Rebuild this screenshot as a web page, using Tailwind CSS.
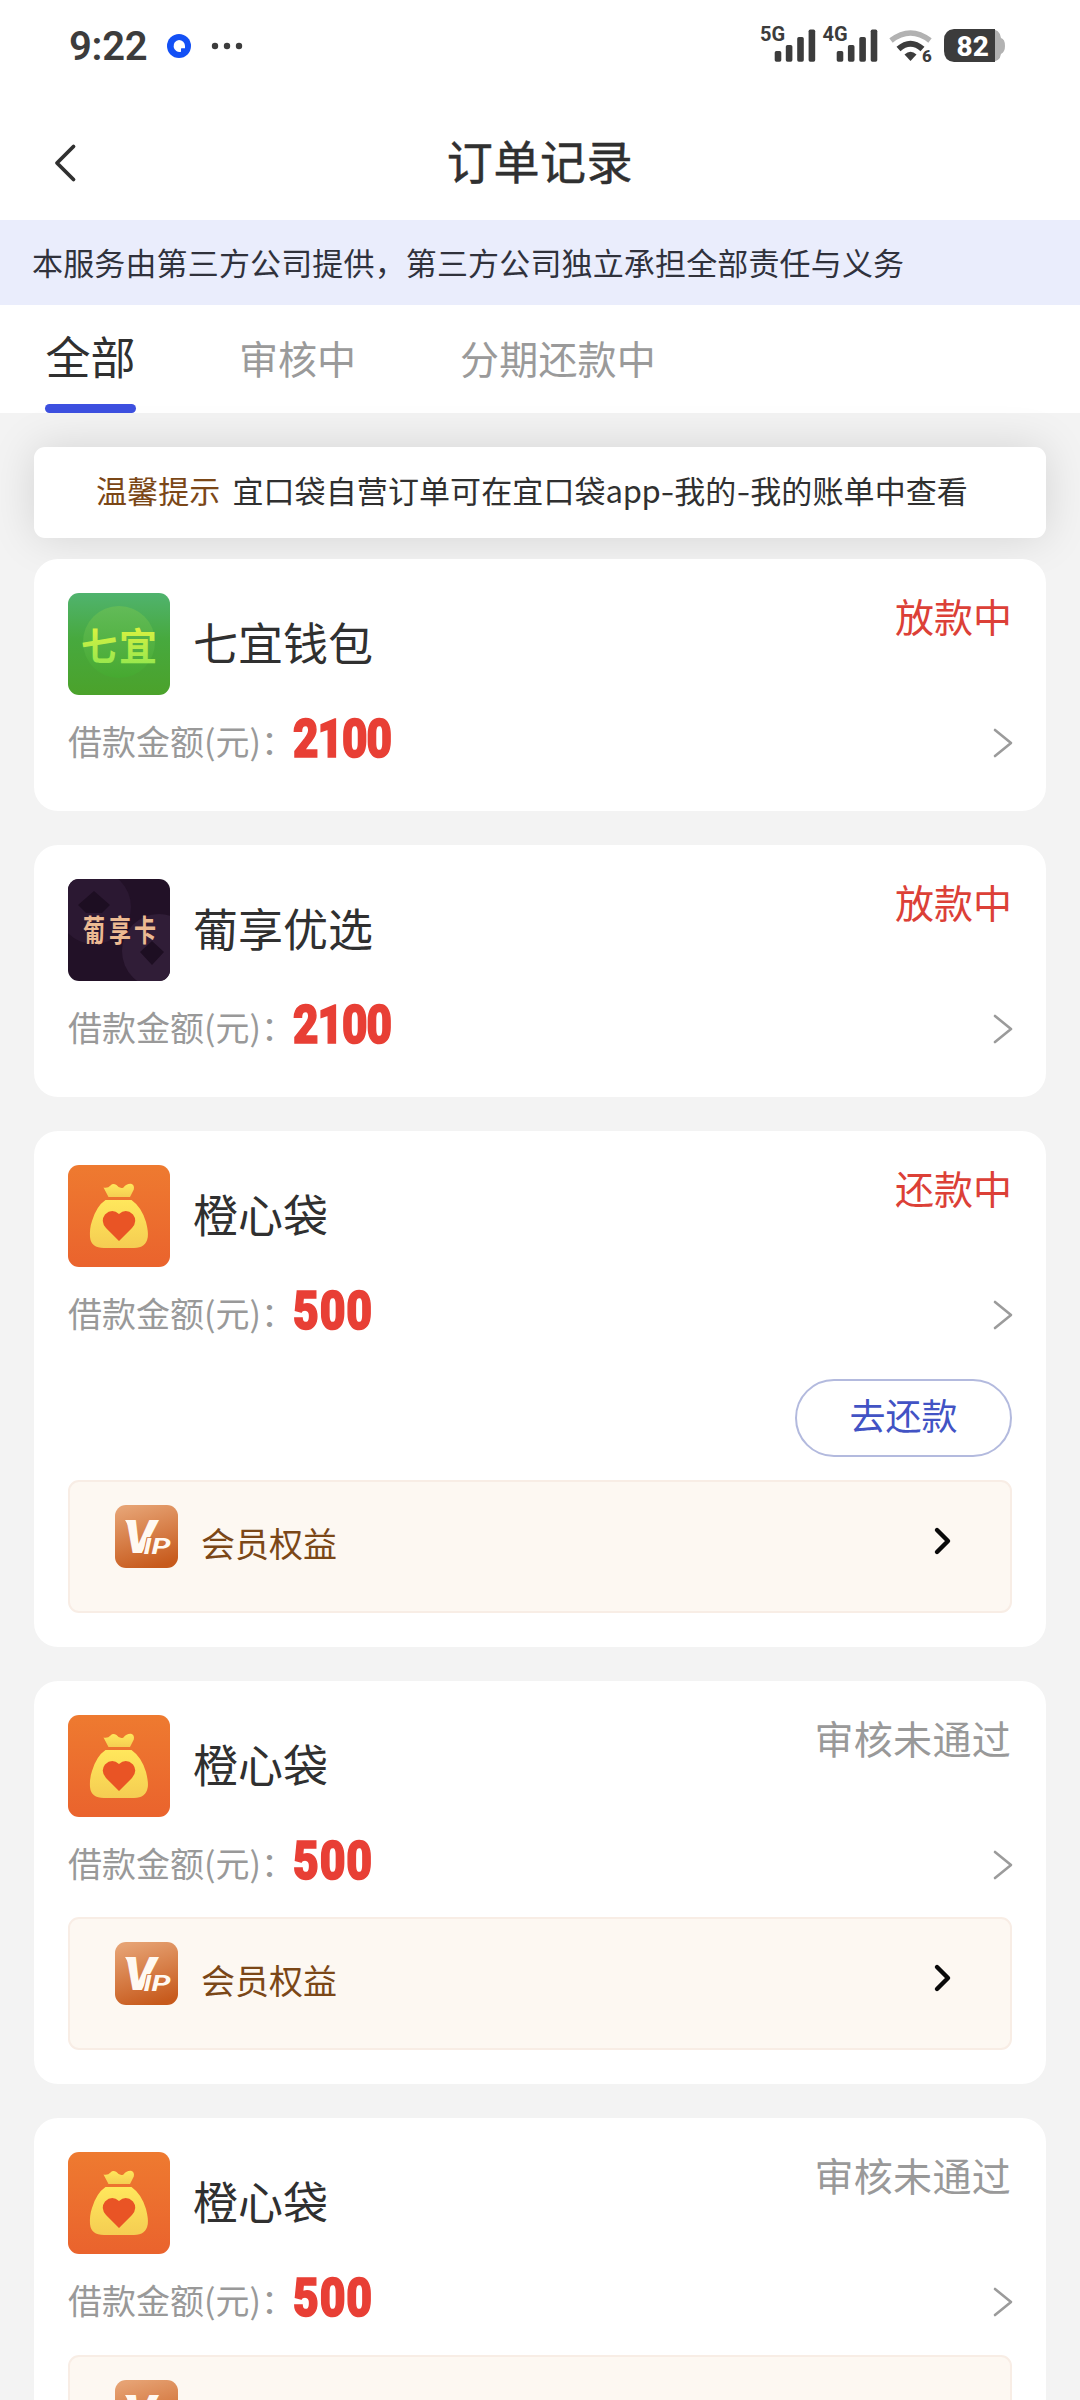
<!DOCTYPE html>
<html lang="zh-CN">
<head>
<meta charset="utf-8">
<title>订单记录</title>
<script src="https://cdn.jsdelivr.net/npm/@tailwindcss/browser@4"></script>
</head>
<body class="w-[1080px] h-[2400px] overflow-hidden bg-[#f3f3f3] text-[#303030] font-['Noto_Sans_CJK_SC',sans-serif] leading-none">

<svg width="0" height="0" class="absolute">
  <defs>
    <linearGradient id="orange" x1="0" y1="0" x2="0" y2="1"><stop offset="0" stop-color="#ee7a30"/><stop offset="1" stop-color="#ea632d"/></linearGradient>
    <linearGradient id="gold" x1="0" y1="0" x2="0" y2="1"><stop offset="0" stop-color="#ffe75c"/><stop offset="1" stop-color="#f5cd52"/></linearGradient>
    <linearGradient id="bronze" x1="0.3" y1="0" x2="0.6" y2="1"><stop offset="0" stop-color="#e6a273"/><stop offset="1" stop-color="#c75a1c"/></linearGradient>
    <linearGradient id="green" x1="0" y1="0" x2="0" y2="1"><stop offset="0" stop-color="#50b36e"/><stop offset="0.45" stop-color="#47a93e"/><stop offset="1" stop-color="#4ba22b"/></linearGradient>
    <linearGradient id="lime" x1="0" y1="0" x2="0" y2="1"><stop offset="0" stop-color="#f0f53c"/><stop offset="1" stop-color="#8be650"/></linearGradient>
    <linearGradient id="disc" x1="0" y1="0" x2="0" y2="1"><stop offset="0" stop-color="#62bb58"/><stop offset="1" stop-color="#46a930"/></linearGradient>
    <symbol id="bag" viewBox="0 0 102 102">
      <rect width="102" height="102" rx="11" fill="url(#orange)"/>
      <path d="M35.500 22.500 Q40 23.500 42.500 20.500 Q45 17.800 48.500 20 Q52 24.500 55.500 22.500 Q58.500 18.500 63 18.800 Q66.800 20 65.800 24.500 L62 32 H40.500 Z" fill="url(#gold)"/>
      <path d="M37.500 35 H63.500 Q73.500 42 78 57 Q80.500 67 79.800 72 Q78 83 66 83 H36 Q23 83 22 72 Q21.500 63 24 56 Q28.500 41 37.500 35 Z" fill="url(#gold)"/>
      <path d="M51 76 L38 63 Q32 56 37 49.500 Q44 43 51 49 Q58 43 65 49.500 Q70 56 64 63 Z" fill="#e95425"/>
    </symbol>
    <symbol id="vip" viewBox="0 0 63 63">
      <rect width="63" height="63" rx="11" fill="url(#bronze)"/>
      <path d="M10 15 H19 V20 H13 Z" fill="#fff9f2"/>
      <text x="8.500" y="48" font-family="Roboto" font-weight="900" font-style="italic" font-size="46" textLength="32" lengthAdjust="spacingAndGlyphs" fill="#fff9f2">V</text>
      <text x="28.500" y="48.500" font-family="Roboto" font-weight="700" font-style="italic" font-size="21.500" textLength="8" lengthAdjust="spacingAndGlyphs" fill="#fff9f2" stroke="#cf6f38" stroke-width="1.600" paint-order="stroke">I</text>
      <text x="36.500" y="48.500" font-family="Roboto" font-weight="700" font-style="italic" font-size="21.500" textLength="19" lengthAdjust="spacingAndGlyphs" fill="#fff9f2">P</text>
    </symbol>
    <symbol id="more" viewBox="0 0 20 30"><path d="M2 2 L18 15 L2 28" fill="none" stroke="#9b9b9b" stroke-width="2.600" stroke-linecap="round" stroke-linejoin="round"/></symbol>
    <symbol id="arrow" viewBox="0 0 20 30"><path d="M4 4 L15 15 L4 26" fill="none" stroke="#0a0a0a" stroke-width="4.400" stroke-linecap="round" stroke-linejoin="round"/></symbol>
  </defs>
</svg>

<!-- status bar -->
<div class="h-[92px] bg-white flex items-center pl-[69px] pr-[70px] text-[#3c3c3c]">
  <span class="font-[Roboto] font-semibold text-[40px] w-[78px] whitespace-nowrap tracking-[-0.3px] translate-y-px">9:22</span>
  <svg class="ml-5" width="24" height="24" viewBox="0 0 24 24"><circle cx="12" cy="12" r="12" fill="#1350f5"/><path d="M12 6a6 6 0 0 1 6 6v2.200h-3.500q-.5 0-.5 .8v2.800A6 6 0 1 1 12 6Z" fill="#fff"/></svg>
  <svg class="ml-[20px]" width="32" height="8" viewBox="0 0 32 8" fill="#3c3c3c"><circle cx="4" cy="4" r="3.200"/><circle cx="16" cy="4" r="3.200"/><circle cx="28" cy="4" r="3.200"/></svg>
  <svg class="ml-auto" width="254" height="60" viewBox="756 16 254 60" fill="#3c3c3c">
    <g font-family="Roboto" font-weight="700" font-size="20">
      <text x="760" y="41">5G</text><text x="822.500" y="41">4G</text>
    </g>
    <rect x="774.700" y="51" width="6.600" height="10.800" rx="1.700"/><rect x="785.800" y="45" width="6.600" height="16.800" rx="1.700"/><rect x="797.200" y="37" width="6.600" height="24.800" rx="1.700"/><rect x="808.600" y="29.500" width="6.600" height="32.300" rx="1.700"/>
    <rect x="836.700" y="51" width="6.600" height="10.800" rx="1.700"/><rect x="847.900" y="45" width="6.600" height="16.800" rx="1.700"/><rect x="859.300" y="37" width="6.600" height="24.800" rx="1.700"/><rect x="870.700" y="29.500" width="6.600" height="32.300" rx="1.700"/>
    <path d="M891 40.500 Q910.500 25.500 930 40.500" fill="none" stroke="#b2b2b2" stroke-width="5.500"/>
    <path d="M898.500 49 Q910.500 38.500 922.500 49" fill="none" stroke="#3c3c3c" stroke-width="6"/>
    <path d="M904.500 54.500 Q910.500 49 916.500 54.500 L910.500 61 Z"/>
    <text x="922" y="62" font-family="Roboto" font-weight="800" font-size="17">6</text>
    <path d="M990 29 q10 0 11 9 q4 1 4 8 q0 6 -4 8 q-1 8 -11 8 Z" fill="#b2b2b2"/>
    <path d="M954 29 H995 V62 H954 Q944 61 944 51 V40 Q944 30 954 29 Z"/>
    <text x="956.500" y="55.500" font-family="Roboto" font-weight="800" font-size="28" fill="#fff">82</text>
  </svg>
</div>

<!-- title bar -->
<header class="h-[128px] bg-white grid grid-cols-[1fr_auto_1fr] items-center">
  <svg class="ml-[53px] mt-[14px]" width="24" height="40" viewBox="0 0 24 40"><path d="M20.500 3.500 L4 20 L20.500 36.500" fill="none" stroke="#303030" stroke-width="3.800" stroke-linecap="round" stroke-linejoin="round"/></svg>
  <h1 class="text-[46px] leading-[60px] mt-[5px] tracking-[0.6px] [-webkit-text-stroke:0.5px_#303030]">订单记录</h1>
</header>

<div class="h-[85px] bg-[#eaedfc] flex items-center pb-[3px] pl-[32px] text-[31px] tracking-[0.15px] text-[#30323c]">本服务由第三方公司提供，第三方公司独立承担全部责任与义务</div>

<!-- tabs -->
<nav class="h-[108px] bg-white flex pl-[45px] text-[39px] text-[#9a9a9a]">
  <div class="w-[91px] flex flex-col items-center justify-between">
    <span class="text-[45px] leading-[60px] mt-[21px] text-[#303030] whitespace-nowrap">全部</span>
    <span class="w-full h-[9px] rounded-full bg-[#3d50e0]"></span>
  </div>
  <span class="ml-[103px] leading-[60px] mt-[22px]">审核中</span>
  <span class="ml-[104px] leading-[60px] mt-[22px] tracking-[0.2px]">分期还款中</span>
</nav>

<main class="flex flex-col px-[34px] pt-[34px]">
  <div class="h-[91px] shrink-0 rounded-[11px] bg-white shadow-[0_0_45px_rgba(0,0,0,0.13)] flex items-center pb-[6px] pl-[62px] text-[31px] whitespace-nowrap">
    <span class="text-[#7b4717] tracking-[0.1px]">温馨提示</span><span class="ml-[12px] tracking-[0.1px]">宜口袋自营订单可在宜口袋<span class="tracking-[-0.4px]">app</span><span class="inline-block scale-x-125 mx-[1.5px]">-</span>我的<span class="inline-block scale-x-125 mx-[1.5px]">-</span>我的账单中查看</span>
  </div>

  <div class="relative mt-[21px] flex flex-col gap-[34px]">
    <!-- order 1 -->
    <section class="bg-white rounded-[24px] p-[34px]">
      <div class="flex h-[102px]">
        <svg width="102" height="102" viewBox="0 0 102 102">
          <rect width="102" height="102" rx="11" fill="url(#green)"/>
          <circle cx="51" cy="49" r="36" fill="url(#disc)"/>
          <g font-family="Noto Sans CJK SC" font-weight="700" font-size="38" fill="url(#lime)"><text x="13" y="67" textLength="36" lengthAdjust="spacingAndGlyphs">七</text><text x="51" y="67" textLength="38" lengthAdjust="spacingAndGlyphs">宜</text></g>
        </svg>
        <h2 class="ml-[23px] text-[45px] leading-[98px]">七宜钱包</h2>
        <span class="ml-auto text-[39px] leading-[45px] text-[#dc4037]">放款中</span>
      </div>
      <div class="mt-[13px] flex h-[69px] items-center">
        <span class="text-[34px] text-[#999999] -translate-y-[2px]">借款金额(元)：</span>
        <span class="-ml-[2px] origin-left scale-x-[0.83] font-[Roboto] text-[53px] tracking-[-1.2px] font-black [-webkit-text-stroke:1.6px_#e83f35] text-[#e83f35] -translate-y-[3px]">2100</span>
        <svg class="ml-auto -mr-px" width="20" height="30"><use href="#more"/></svg>
      </div>
    </section>

    <!-- order 2 -->
    <section class="bg-white rounded-[24px] p-[34px]">
      <div class="flex h-[102px]">
        <svg width="102" height="102" viewBox="0 0 102 102">
          <clipPath id="tile"><rect width="102" height="102" rx="11"/></clipPath>
          <g clip-path="url(#tile)">
            <rect width="102" height="102" fill="#221127"/>
            <circle cx="26" cy="28" r="37" fill="#2b1832"/><circle cx="91" cy="72" r="37" fill="#301d37"/>
            <path d="M26 12 L42 26 L34 34 H18 L10 26 Z M84 62 L96 73 L84 86 L72 73 Z" fill="#1d0e22"/>
          </g>
          <g font-family="Noto Sans CJK SC" font-weight="700" font-size="30" fill="#ecba92"><text x="15" y="62" textLength="22" lengthAdjust="spacingAndGlyphs">葡</text><text x="41" y="62" textLength="22" lengthAdjust="spacingAndGlyphs">享</text><text x="66" y="62" textLength="22" lengthAdjust="spacingAndGlyphs">卡</text></g>
        </svg>
        <h2 class="ml-[23px] text-[45px] leading-[98px]">葡享优选</h2>
        <span class="ml-auto text-[39px] leading-[45px] text-[#dc4037]">放款中</span>
      </div>
      <div class="mt-[13px] flex h-[69px] items-center">
        <span class="text-[34px] text-[#999999] -translate-y-[2px]">借款金额(元)：</span>
        <span class="-ml-[2px] origin-left scale-x-[0.83] font-[Roboto] text-[53px] tracking-[-1.2px] font-black [-webkit-text-stroke:1.6px_#e83f35] text-[#e83f35] -translate-y-[3px]">2100</span>
        <svg class="ml-auto -mr-px" width="20" height="30"><use href="#more"/></svg>
      </div>
    </section>

    <!-- order 3 -->
    <section class="bg-white rounded-[24px] p-[34px]">
      <div class="flex h-[102px]">
        <svg width="102" height="102"><use href="#bag"/></svg>
        <h2 class="ml-[23px] text-[45px] leading-[98px]">橙心袋</h2>
        <span class="ml-auto text-[39px] leading-[45px] text-[#dc4037]">还款中</span>
      </div>
      <div class="mt-[13px] flex h-[69px] items-center">
        <span class="text-[34px] text-[#999999] -translate-y-[2px]">借款金额(元)：</span>
        <span class="-ml-[2px] origin-left scale-x-[0.84] font-[Roboto] text-[53px] tracking-[1px] font-black [-webkit-text-stroke:1.6px_#e83f35] text-[#e83f35] -translate-y-[3px]">500</span>
        <svg class="ml-auto -mr-px" width="20" height="30"><use href="#more"/></svg>
      </div>
      <button class="mt-[30px] ml-auto flex h-[78px] w-[217px] items-center justify-center rounded-full border-2 border-[#b3bade] pb-[8px] text-[36px] text-[#4253c4]">去还款</button>
      <div class="mt-[23px] flex h-[133px] items-start rounded-[11px] border-2 border-[#f8ede5] bg-[#fdf8f2] pl-[45px] pr-[57px]">
        <svg class="mt-[23px]" width="63" height="63"><use href="#vip"/></svg>
        <span class="ml-[23px] mt-[36px] text-[34px] leading-[50px] text-[#7b4717]">会员权益</span>
        <svg class="ml-auto mt-[44px]" width="20" height="30"><use href="#arrow"/></svg>
      </div>
    </section>

    <!-- order 4 -->
    <section class="bg-white rounded-[24px] p-[34px]">
      <div class="flex h-[102px]">
        <svg width="102" height="102"><use href="#bag"/></svg>
        <h2 class="ml-[23px] text-[45px] leading-[98px]">橙心袋</h2>
        <span class="ml-auto mr-px text-[39px] leading-[45px] tracking-[0.3px] text-[#999999]">审核未通过</span>
      </div>
      <div class="mt-[13px] flex h-[69px] items-center">
        <span class="text-[34px] text-[#999999] -translate-y-[2px]">借款金额(元)：</span>
        <span class="-ml-[2px] origin-left scale-x-[0.84] font-[Roboto] text-[53px] tracking-[1px] font-black [-webkit-text-stroke:1.6px_#e83f35] text-[#e83f35] -translate-y-[3px]">500</span>
        <svg class="ml-auto -mr-px" width="20" height="30"><use href="#more"/></svg>
      </div>
      <div class="mt-[18px] flex h-[133px] items-start rounded-[11px] border-2 border-[#f8ede5] bg-[#fdf8f2] pl-[45px] pr-[57px]">
        <svg class="mt-[23px]" width="63" height="63"><use href="#vip"/></svg>
        <span class="ml-[23px] mt-[36px] text-[34px] leading-[50px] text-[#7b4717]">会员权益</span>
        <svg class="ml-auto mt-[44px]" width="20" height="30"><use href="#arrow"/></svg>
      </div>
    </section>

    <!-- order 5 -->
    <section class="h-[282px] overflow-hidden bg-white rounded-t-[24px] px-[34px] pt-[34px]">
      <div class="flex h-[102px]">
        <svg width="102" height="102"><use href="#bag"/></svg>
        <h2 class="ml-[23px] text-[45px] leading-[98px]">橙心袋</h2>
        <span class="ml-auto mr-px text-[39px] leading-[45px] tracking-[0.3px] text-[#999999]">审核未通过</span>
      </div>
      <div class="mt-[13px] flex h-[69px] items-center">
        <span class="text-[34px] text-[#999999] -translate-y-[2px]">借款金额(元)：</span>
        <span class="-ml-[2px] origin-left scale-x-[0.84] font-[Roboto] text-[53px] tracking-[1px] font-black [-webkit-text-stroke:1.6px_#e83f35] text-[#e83f35] -translate-y-[3px]">500</span>
        <svg class="ml-auto -mr-px" width="20" height="30"><use href="#more"/></svg>
      </div>
      <div class="mt-[19px] flex h-[133px] items-start rounded-[11px] border-2 border-[#f8ede5] bg-[#fdf8f2] pl-[45px] pr-[57px]">
        <svg class="mt-[23px]" width="63" height="63"><use href="#vip"/></svg>
      </div>
    </section>
  </div>
</main>
</body>
</html>
